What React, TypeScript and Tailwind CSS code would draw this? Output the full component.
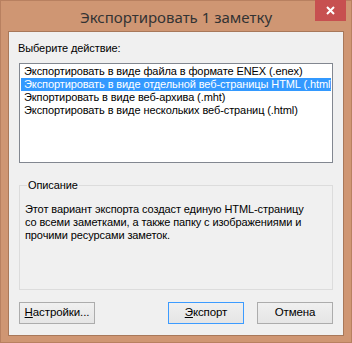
import React from 'react';

const items = [
  'Экспортировать в виде файла в формате ENEX (.enex)',
  'Экспортировать в виде отдельной веб-страницы HTML (.html)',
  'Экпортировать в виде веб-архива (.mht)',
  'Экспортировать в виде нескольких веб-страниц (.html)',
];

function Button({ children, primary }: { children: React.ReactNode; primary?: boolean }) {
  return (
    <button
      className={
        primary
          ? 'w-[76px] h-[22px] border border-[#3c9bff] bg-gradient-to-b from-[#f0f0f0] to-[#e5e5e5] text-[11.5px] text-black leading-none'
          : 'w-[76px] h-[22px] border border-[#acacac] bg-gradient-to-b from-[#f0f0f0] to-[#e5e5e5] text-[11.5px] text-black leading-none'
      }
    >
      {children}
    </button>
  );
}

export default function App() {
  return (
    <div
      className="w-[352px] h-[343px] bg-[#cf9673] border border-[#b88060] flex flex-col"
      style={{ fontFamily: '"Liberation Sans", Arial, sans-serif' }}
    >
      {/* Title bar */}
      <div className="relative h-[30px] flex items-center justify-center">
        <span className="text-[15px] text-[#333] pt-[2px]" style={{ fontFamily: '"Noto Sans", sans-serif' }}>
          Экспортировать 1 заметку
        </span>
        <div className="absolute right-[5px] -top-[1px] w-[31px] h-[21px] bg-[#c75050] flex items-center justify-center">
          <svg width="9" height="9" viewBox="0 0 9 9">
            <path d="M1 1 L8 8 M8 1 L1 8" stroke="white" strokeWidth="2" />
          </svg>
        </div>
      </div>

      {/* Client area */}
      <div className="mx-[7px] border border-[#a8785a] bg-[#f0f0f0] flex flex-col px-[10px] pb-[11px] text-[11px] tracking-[-0.1px] text-black">
        <div className="mt-[9px] ml-[-1px] leading-[15px]">Выберите действие:</div>

        <div className="mt-[7px] h-[100px] border border-[#828790] bg-white pt-[1px] px-[1px] overflow-hidden">
          {items.map((t, i) => (
            <div
              key={i}
              className={
                i === 1
                  ? 'h-[13px] leading-[13px] pl-[3px] whitespace-nowrap overflow-hidden bg-[#3399ff] text-white'
                  : 'h-[13px] leading-[13px] pl-[3px] whitespace-nowrap overflow-hidden'
              }
            >
              {t}
            </div>
          ))}
        </div>

        <div className="relative mt-[22px] h-[105px] border border-[#dcdcdc] px-[5px] pt-[17px]">
          <span className="absolute left-[7px] -top-[8px] bg-[#f0f0f0] px-[1px] leading-[15px]">Описание</span>
          <p className="leading-[13px] whitespace-nowrap">
            Этот вариант экспорта создаст единую HTML-страницу
            <br />
            со всеми заметками, а также папку с изображениями и
            <br />
            прочими ресурсами заметок.
          </p>
        </div>

        <div className="mt-[12px] flex items-center">
          <Button>
            <span className="underline">Н</span>астройки...
          </Button>
          <div className="flex-1" />
          <Button primary>
            <span className="underline">Э</span>кспорт
          </Button>
          <div className="w-[13px]" />
          <Button>Отмена</Button>
        </div>
      </div>
    </div>
  );
}
